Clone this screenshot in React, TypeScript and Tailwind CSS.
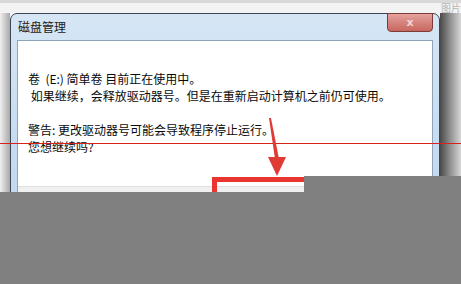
const cjk = { fontFamily: '"Noto Sans CJK SC", "Noto Sans", sans-serif' }

const messageLines = [
  "卷  (E:) 简单卷 目前正在使用中。",
  " 如果继续，会释放驱动器号。但是在重新启动计算机之前仍可使用。",
  "",
  "警告: 更改驱动器号可能会导致程序停止运行。",
  "您想继续吗?",
]

const App = () => {
  return (
    <div className="relative w-[461px] h-[284px] overflow-hidden bg-[#f3f3f3]" style={cjk}>
      {/* page behind the dialog */}
      <div className="h-[3px] bg-[#d9d9d9]" />
      <div className="flex">
        <div className="w-[10px] mt-[10px] h-[280px] bg-gradient-to-r from-[#efefef] to-[#a9a9a9]" />

        {/* Dialog window */}
        <div className="w-[430px] mt-[10px] h-[290px] rounded-t-[7px] border border-[#3c4654] bg-gradient-to-b from-[#d6e6f5] via-[#c5dbf0] to-[#bcd3ea] flex flex-col">
          {/* Title bar */}
          <div className="h-[26px] flex items-start justify-between">
            <span className="pl-[7px] pt-[6px] text-[12px] leading-[14px] text-[#1a1a1a]">磁盘管理</span>
            <div className="mr-[6px] w-[46px] h-[19px] -mt-[1px] rounded-b-[4px] border border-[#7b3b37] bg-gradient-to-b from-[#e6a39d] via-[#d4847d] to-[#c8675f] flex items-center justify-center">
              <span className="text-[11px] leading-none font-bold text-[#f3d6d3]" style={{ fontFamily: '"DejaVu Sans", sans-serif' }}>x</span>
            </div>
          </div>

          {/* Content */}
          <div className="mx-[6px] border border-[#8fa3ba] bg-white flex-1 flex flex-col">
            <div className="pt-[29px] pl-[10px] h-[145px] text-[12px] leading-[17px] text-[#0a0a0a]">
              {messageLines.map((line, i) => (
                <div key={i} className="h-[17px] whitespace-pre">{line}</div>
              ))}
            </div>
            <div className="flex-1 bg-[#f0f0f0] border-t border-[#dfdfdf]" />
          </div>
        </div>

        <div className="w-[21px] mt-[10px] h-[280px] bg-gradient-to-r from-[#4a4a4a] via-[#929292] to-[#d8d8d8]" />
      </div>

      <span className="absolute left-[441px] top-[2px] whitespace-nowrap text-[10px] leading-[12px] text-[#b5b5b5]">图片</span>

      {/* red annotation line */}
      <div className="absolute left-0 top-[143px] w-full h-[1px] bg-[#d8231d]" />

      {/* red arrow */}
      <svg className="absolute left-[262px] top-[112px]" width="30" height="66" viewBox="0 0 30 66">
        <polygon points="7,6 9,6 17,47 13,47" fill="#e03a34" />
        <polygon points="6,45 24,45 15,64" fill="#e03a34" />
      </svg>

      {/* red box */}
      <div className="absolute left-[212px] top-[177px] w-[130px] h-[50px] border-[5px] border-[#e8352f]" />

      {/* grey redaction */}
      <div className="absolute left-[304px] top-[176px] right-0 bottom-0 bg-[#808080]" />
      <div className="absolute left-0 top-[192px] right-0 bottom-0 bg-[#808080]" />
    </div>
  )
}

export default App
